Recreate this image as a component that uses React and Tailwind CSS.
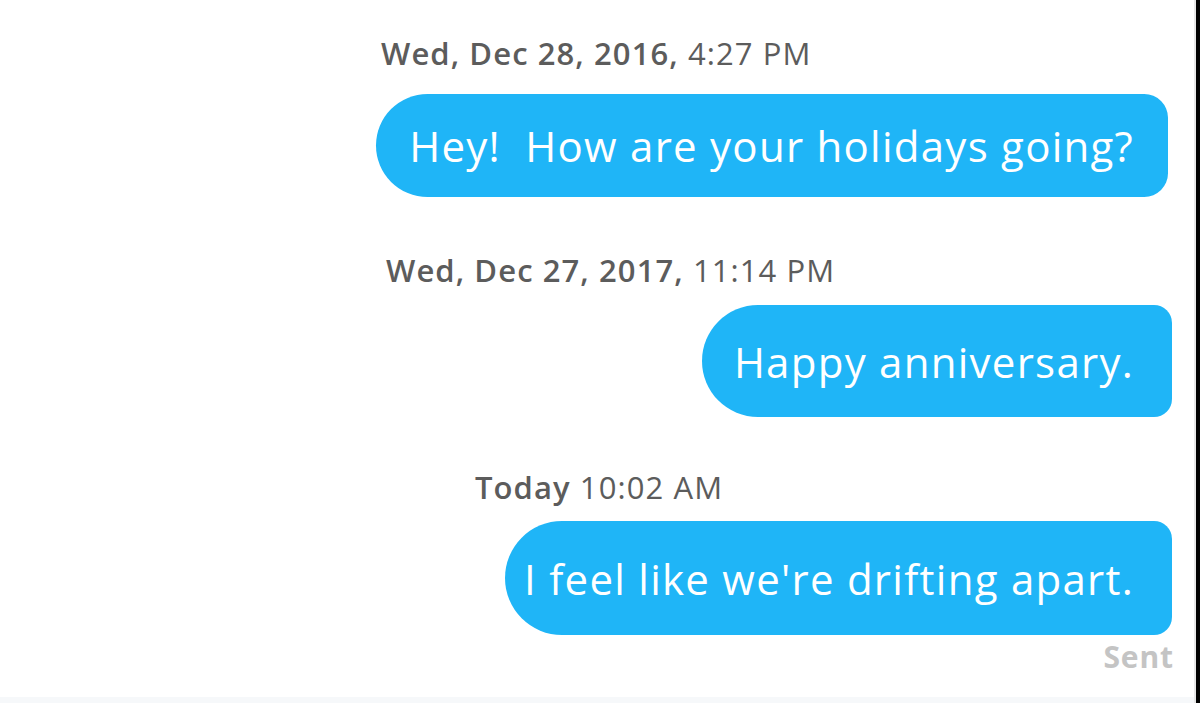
import React from 'react';

const messages = [
  {
    id: 1,
    stampBold: 'Wed, Dec 28, 2016,',
    stampRest: ' 4:27 PM',
    stampClass: 'ml-[381px] mt-[36px]',
    text: 'Hey!\u00a0 How are your holidays going?',
    bubbleClass: 'ml-[376px] w-[792px] h-[103px] mt-[24px] rounded-l-[52px] rounded-r-[24px] pr-[34px]'
  },
  {
    id: 2,
    stampBold: 'Wed, Dec 27, 2017,',
    stampRest: ' 11:14 PM',
    stampClass: 'ml-[386px] mt-[56px]',
    text: 'Happy anniversary.',
    bubbleClass: 'ml-[702px] w-[470px] h-[112px] mt-[18px] rounded-l-[56px] rounded-r-[18px] pr-[38px]'
  },
  {
    id: 3,
    stampBold: 'Today',
    stampRest: ' 10:02 AM',
    stampClass: 'ml-[475px] mt-[53px]',
    text: "I feel like we're drifting apart.",
    bubbleClass: 'ml-[505px] w-[667px] h-[114px] mt-[17px] rounded-l-[57px] rounded-r-[18px] pr-[38px]'
  }
];

function App() {
  return (
    <div
      className="w-[1200px] h-[703px] bg-white flex overflow-hidden"
      style={{ fontFamily: '"Open Sans", "Liberation Sans", sans-serif' }}
    >
      <div className="flex-1 flex flex-col">
        <div className="flex-1">
          {messages.map((m) => (
            <div key={m.id}>
              <div
                className={
                  'text-[31px] leading-[34px] tracking-[0.035em] text-[#5c5c5c] whitespace-nowrap ' + m.stampClass
                }
              >
                <span className="font-semibold">{m.stampBold}</span>
                <span>{m.stampRest}</span>
              </div>
              <div
                className={
                  'bg-[#1fb5f7] text-white text-[42px] tracking-[0.03em] flex items-center justify-end whitespace-nowrap ' +
                  m.bubbleClass
                }
              >
                {m.text}
              </div>
            </div>
          ))}
          <div className="ml-[1094px] w-[80px] mt-[5px] text-right text-[30px] leading-[34px] tracking-[0.03em] font-bold text-[#c4c4c4]">
            Sent
          </div>
        </div>
        <div className="h-[6px] bg-[#f6f8fa]" />
      </div>
      <div className="w-[2px] bg-[#e6e6e6]" />
      <div className="w-[4px] bg-black" />
    </div>
  );
}

export default App;
